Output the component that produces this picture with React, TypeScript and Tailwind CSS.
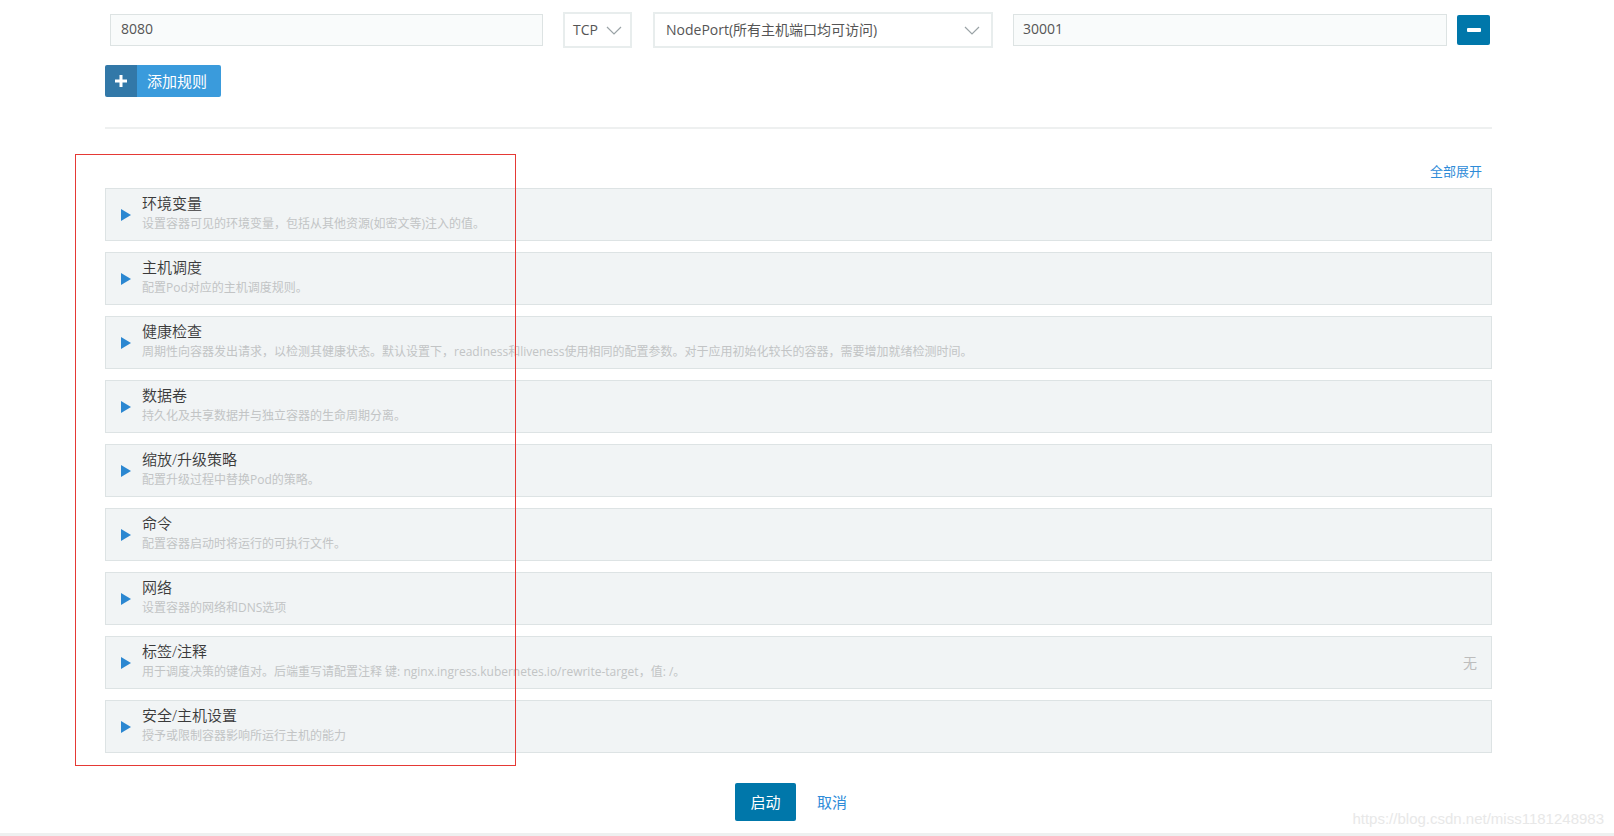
import React from "react";

interface Section {
  title: string;
  desc: string;
  extra?: string;
}

const sections: Section[] = [
  { title: "环境变量", desc: "设置容器可见的环境变量，包括从其他资源(如密文等)注入的值。" },
  { title: "主机调度", desc: "配置Pod对应的主机调度规则。" },
  {
    title: "健康检查",
    desc: "周期性向容器发出请求，以检测其健康状态。默认设置下，readiness和liveness使用相同的配置参数。对于应用初始化较长的容器，需要增加就绪检测时间。",
  },
  { title: "数据卷", desc: "持久化及共享数据并与独立容器的生命周期分离。" },
  { title: "缩放/升级策略", desc: "配置升级过程中替换Pod的策略。" },
  { title: "命令", desc: "配置容器启动时将运行的可执行文件。" },
  { title: "网络", desc: "设置容器的网络和DNS选项" },
  {
    title: "标签/注释",
    desc: "用于调度决策的键值对。后端重写请配置注释 键: nginx.ingress.kubernetes.io/rewrite-target，值: /。",
    extra: "无",
  },
  { title: "安全/主机设置", desc: "授予或限制容器影响所运行主机的能力" },
];

const Chevron = () => (
  <svg width="16" height="9" viewBox="0 0 16 9" fill="none">
    <path d="M1 1l7 7 7-7" stroke="#9aa3a6" strokeWidth="1.2" />
  </svg>
);

const Caret = () => (
  <svg width="10" height="12" viewBox="0 0 10 12" className="shrink-0">
    <polygon points="0,0 10,6 0,12" fill="#2b87d1" />
  </svg>
);

const SectionPanel: React.FC<{ section: Section }> = ({ section }) => (
  <div className="h-[53px] border border-[#dde3e4] bg-[#f1f4f5] flex items-center pl-[15px] pr-[14px]">
    <Caret />
    <div className="ml-[11px] flex flex-col mb-[4px] grow">
      <div className="text-[15px] leading-[20px] font-[350] text-[#3a3a3a]">{section.title}</div>
      <div className="mt-[3px] text-[12px] leading-[16px] text-[#c2c4c5]">{section.desc}</div>
    </div>
    {section.extra && <span className="text-[14px] text-[#bdbdbd]">{section.extra}</span>}
  </div>
);

export default function App() {
  return (
    <div className="relative w-[1614px] h-[836px] overflow-hidden bg-white font-['Open_Sans','Noto_Sans_CJK_SC',sans-serif] flex flex-col">
      <div className="ml-[105px] w-[1387px] pt-[12px]">
        {/* port rule row */}
        <div className="flex items-center h-[36px] pl-[5px]">
          <div className="w-[433px] h-[32px] border border-[#dde3e3] bg-[#f9fbfb] flex items-center pl-[10px] pb-[3px] text-[14px] text-[#555]">
            8080
          </div>
          <div className="ml-[20px] w-[69px] h-[36px] border-2 border-[#e8eded] bg-white flex items-center justify-between pl-[8px] pr-[8px] text-[14px] text-[#555]">
            <span className="-mt-[2px]">TCP</span>
            <Chevron />
          </div>
          <div className="ml-[21px] w-[340px] h-[36px] border-2 border-[#e8eded] bg-white flex items-center justify-between pl-[11px] pr-[11px] text-[14px] text-[#555]">
            <span className="-mt-[2px]">NodePort(所有主机端口均可访问)</span>
            <Chevron />
          </div>
          <div className="ml-[20px] w-[434px] h-[32px] border border-[#dde3e3] bg-[#f9fbfb] flex items-center pl-[9px] pb-[3px] text-[14px] text-[#555]">
            30001
          </div>
          <button className="ml-[10px] w-[33px] h-[30px] rounded-[2px] bg-[#0077aa] flex items-center justify-center">
            <span className="block w-[14px] h-[4px] bg-white rounded-[1px]" />
          </button>
        </div>

        {/* add rule */}
        <button className="mt-[17px] h-[32px] w-[116px] flex rounded-[2px] overflow-hidden">
          <span className="w-[32px] h-full bg-[#3278a8] flex items-center justify-center">
            <svg width="12" height="12" viewBox="0 0 12 12">
              <rect x="4.5" y="0" width="3" height="12" fill="#fff" />
              <rect x="0" y="4.5" width="12" height="3" fill="#fff" />
            </svg>
          </span>
          <span className="grow h-full bg-[#3a9bdc] flex items-center pl-[10px] text-[15px] text-white">
            添加规则
          </span>
        </button>

        <div className="mt-[30px] h-[2px] bg-[#eef0f0]" />

        <div className="mt-[33px] h-[18px] flex justify-end pr-[10px]">
          <span className="text-[13px] leading-[18px] text-[#2e8bd8]">全部展开</span>
        </div>

        <div className="mt-[8px] flex flex-col gap-[11px]">
          {sections.map((s) => (
            <SectionPanel key={s.title} section={s} />
          ))}
        </div>

        <div className="mt-[30px] flex justify-center pr-[15px] items-center">
          <button className="w-[61px] h-[38px] rounded-[2px] bg-[#0077aa] text-white text-[15px]">启动</button>
          <span className="ml-[21px] text-[15px] text-[#2e8bd8]">取消</span>
        </div>
      </div>

      <div className="mt-auto h-[3px] bg-[#eef0f0]" />

      {/* annotation box */}
      <div className="absolute left-[75px] top-[154px] w-[441px] h-[612px] border border-[#e53935] pointer-events-none" />

      {/* watermark */}
      <div className="absolute right-[10px] top-[808px] text-[15px] text-[#e8e8e8] font-['Liberation_Sans',sans-serif]">
        https://blog.csdn.net/miss1181248983
      </div>
    </div>
  );
}
